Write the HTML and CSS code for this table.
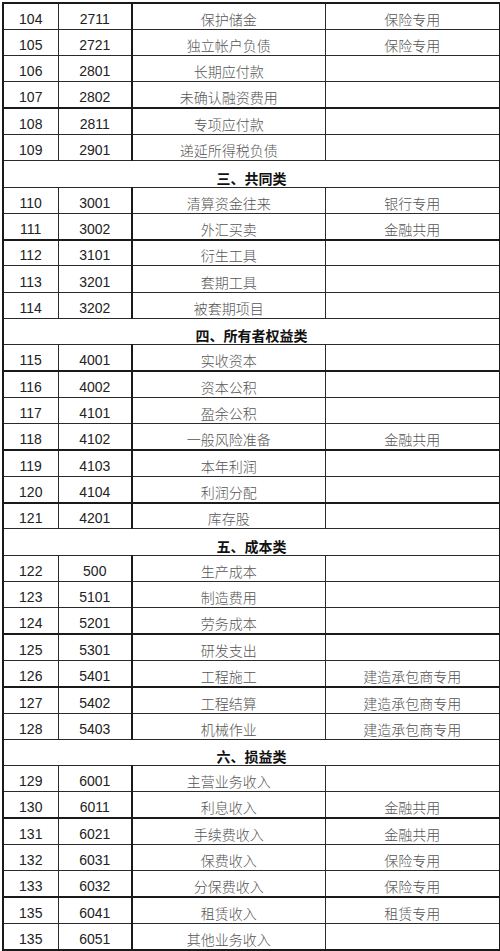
FILE: index.html
```html
<!DOCTYPE html>
<html lang="zh-CN">
<head>
<meta charset="utf-8">
<title>会计科目表</title>
<link rel="stylesheet" href="styles.css">
</head>
<body>
<table class="ledger">
  <colgroup>
    <col class="c-no">
    <col class="c-code">
    <col class="c-name">
    <col class="c-note">
  </colgroup>
  <tbody>
    <tr><td class="num">104</td><td class="num">2711</td><td class="zh">保护储金</td><td class="zh">保险专用</td></tr>
    <tr><td class="num">105</td><td class="num">2721</td><td class="zh">独立帐户负债</td><td class="zh">保险专用</td></tr>
    <tr><td class="num">106</td><td class="num">2801</td><td class="zh">长期应付款</td><td class="zh"></td></tr>
    <tr class="thick"><td class="num">107</td><td class="num">2802</td><td class="zh">未确认融资费用</td><td class="zh"></td></tr>
    <tr><td class="num">108</td><td class="num">2811</td><td class="zh">专项应付款</td><td class="zh"></td></tr>
    <tr><td class="num">109</td><td class="num">2901</td><td class="zh">递延所得税负债</td><td class="zh"></td></tr>
    <tr class="section"><td colspan="4">三、共同类</td></tr>
    <tr><td class="num">110</td><td class="num">3001</td><td class="zh">清算资金往来</td><td class="zh">银行专用</td></tr>
    <tr class="thick"><td class="num">111</td><td class="num">3002</td><td class="zh">外汇买卖</td><td class="zh">金融共用</td></tr>
    <tr><td class="num">112</td><td class="num">3101</td><td class="zh">衍生工具</td><td class="zh"></td></tr>
    <tr><td class="num">113</td><td class="num">3201</td><td class="zh">套期工具</td><td class="zh"></td></tr>
    <tr><td class="num">114</td><td class="num">3202</td><td class="zh">被套期项目</td><td class="zh"></td></tr>
    <tr class="section"><td colspan="4">四、所有者权益类</td></tr>
    <tr class="thick"><td class="num">115</td><td class="num">4001</td><td class="zh">实收资本</td><td class="zh"></td></tr>
    <tr><td class="num">116</td><td class="num">4002</td><td class="zh">资本公积</td><td class="zh"></td></tr>
    <tr><td class="num">117</td><td class="num">4101</td><td class="zh">盈余公积</td><td class="zh"></td></tr>
    <tr class="thick"><td class="num">118</td><td class="num">4102</td><td class="zh">一般风险准备</td><td class="zh">金融共用</td></tr>
    <tr><td class="num">119</td><td class="num">4103</td><td class="zh">本年利润</td><td class="zh"></td></tr>
    <tr class="thick"><td class="num">120</td><td class="num">4104</td><td class="zh">利润分配</td><td class="zh"></td></tr>
    <tr><td class="num">121</td><td class="num">4201</td><td class="zh">库存股</td><td class="zh"></td></tr>
    <tr class="section"><td colspan="4">五、成本类</td></tr>
    <tr><td class="num">122</td><td class="num">500</td><td class="zh">生产成本</td><td class="zh"></td></tr>
    <tr><td class="num">123</td><td class="num">5101</td><td class="zh">制造费用</td><td class="zh"></td></tr>
    <tr class="thick"><td class="num">124</td><td class="num">5201</td><td class="zh">劳务成本</td><td class="zh"></td></tr>
    <tr><td class="num">125</td><td class="num">5301</td><td class="zh">研发支出</td><td class="zh"></td></tr>
    <tr class="thick"><td class="num">126</td><td class="num">5401</td><td class="zh">工程施工</td><td class="zh">建造承包商专用</td></tr>
    <tr><td class="num">127</td><td class="num">5402</td><td class="zh">工程结算</td><td class="zh">建造承包商专用</td></tr>
    <tr><td class="num">128</td><td class="num">5403</td><td class="zh">机械作业</td><td class="zh">建造承包商专用</td></tr>
    <tr class="section"><td colspan="4">六、损益类</td></tr>
    <tr><td class="num">129</td><td class="num">6001</td><td class="zh">主营业务收入</td><td class="zh"></td></tr>
    <tr class="thick"><td class="num">130</td><td class="num">6011</td><td class="zh">利息收入</td><td class="zh">金融共用</td></tr>
    <tr><td class="num">131</td><td class="num">6021</td><td class="zh">手续费收入</td><td class="zh">金融共用</td></tr>
    <tr><td class="num">132</td><td class="num">6031</td><td class="zh">保费收入</td><td class="zh">保险专用</td></tr>
    <tr class="thick"><td class="num">133</td><td class="num">6032</td><td class="zh">分保费收入</td><td class="zh">保险专用</td></tr>
    <tr><td class="num">135</td><td class="num">6041</td><td class="zh">租赁收入</td><td class="zh">租赁专用</td></tr>
    <tr><td class="num">135</td><td class="num">6051</td><td class="zh">其他业务收入</td><td class="zh"></td></tr>
  </tbody>
</table>
</body>
</html>
```

FILE: styles.css
```css
html, body {
  margin: 0;
  padding: 0;
  background: #ffffff;
}

body {
  padding: 2px 0 0 2px;
}

.ledger {
  border-collapse: collapse;
  table-layout: fixed;
  width: 497px;
  border: 2px solid #1a1a1a;
}

.c-no { width: 55px; }
.c-code { width: 74px; }
.c-name { width: 193px; }
.c-note { width: 175px; }

.ledger tr {
  height: 26.3px;
}

.ledger td {
  border: 1px solid #2a2a2a;
  padding: 0 0 2px 0;
  text-align: center;
  vertical-align: bottom;
  line-height: 16px;
  white-space: nowrap;
  overflow: hidden;
}

.ledger td:nth-child(2) {
  border-right: 2px solid #1a1a1a;
}

.ledger tr.thick td {
  border-bottom: 2px solid #1a1a1a;
}

.num {
  font-family: "Liberation Sans", Arial, sans-serif;
  font-size: 14px;
  color: #222222;
}

.zh {
  font-family: "Noto Sans CJK SC", sans-serif;
  font-size: 14px;
  font-weight: 300;
  color: #555555;
  padding-bottom: 1px;
}

.section td {
  font-family: "Noto Sans CJK SC", sans-serif;
  font-size: 14px;
  font-weight: 700;
  color: #111111;
  padding-bottom: 1px;
}
```
